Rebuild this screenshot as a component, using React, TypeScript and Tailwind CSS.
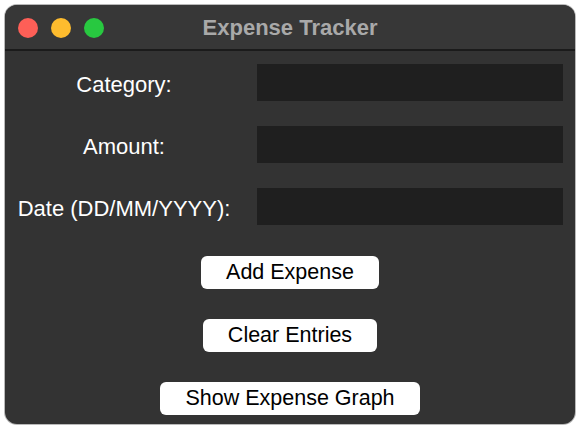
import React from "react";

const font = { fontFamily: '"Liberation Sans", Arial, sans-serif' };

function Row({ label }: { label: string }) {
  return (
    <div className="grid grid-cols-[238px_306px] gap-x-[14px] items-center h-[37px]">
      <div className="text-center text-white text-[22px] leading-none pt-[4px]">{label}</div>
      <div className="h-[37px] bg-[#1f1f1f]" />
    </div>
  );
}

function Btn({ children }: { children: React.ReactNode }) {
  return (
    <button className="h-[33px] px-[25px] bg-white rounded-[6px] text-black text-[21.5px] leading-none">
      {children}
    </button>
  );
}

export default function App() {
  return (
    <div className="w-[581px] h-[429px] bg-white p-[5px]" style={font}>
      <div className="w-[570px] h-[419px] rounded-[12px] bg-[#333333] overflow-hidden flex flex-col shadow-[0_0_0_1px_#b9b9b9]">
        <div className="h-[46px] bg-[#373737] grid grid-cols-[1fr_auto_1fr] items-center border-b-[2px] border-[#1b1b1b]">
          <div className="flex items-center gap-[13px] pl-[13px] pt-[1px]">
            <span className="w-[20px] h-[20px] rounded-full bg-[#fe5f57]" />
            <span className="w-[20px] h-[20px] rounded-full bg-[#febc2e]" />
            <span className="w-[20px] h-[20px] rounded-full bg-[#28c840]" />
          </div>
          <div className="text-[22px] font-bold text-[#a9a9a9] leading-none pt-[1px]">Expense Tracker</div>
          <div />
        </div>
        <div className="flex flex-col pt-[13px]">
          <div className="flex flex-col gap-[25px]">
            <Row label="Category:" />
            <Row label="Amount:" />
            <Row label="Date (DD/MM/YYYY):" />
          </div>
          <div className="flex flex-col items-center gap-[30px] mt-[31px]">
            <Btn>Add Expense</Btn>
            <Btn>Clear Entries</Btn>
            <Btn>Show Expense Graph</Btn>
          </div>
        </div>
      </div>
    </div>
  );
}
